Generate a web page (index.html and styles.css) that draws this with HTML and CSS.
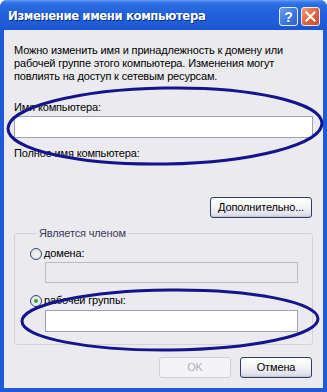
FILE: index.html
```html
<!DOCTYPE html>
<html lang="ru">
<head>
<meta charset="utf-8">
<title>Изменение имени компьютера</title>
<link rel="stylesheet" href="styles.css">
</head>
<body>
<div class="window">
  <div class="titlebar">
    <span class="title">Изменение имени компьютера</span>
    <div class="tbtns">
      <span class="tbtn help">?</span>
      <span class="tbtn close"><svg width="11" height="11" viewBox="0 0 11 11"><path d="M1.5 1.5 L9.5 9.5 M9.5 1.5 L1.5 9.5" stroke="#fff" stroke-width="2.2" stroke-linecap="square"/></svg></span>
    </div>
  </div>
  <div class="body">
    <p class="intro">Можно изменить имя и принадлежность к домену или<br>рабочей группе этого компьютера. Изменения могут<br>повлиять на доступ к сетевым ресурсам.</p>
    <div class="lbl first">Имя компьютера:</div>
    <div class="input name"></div>
    <div class="lbl full">Полное имя компьютера:</div>
    <div class="row-right more"><button class="btn wide">Дополнительно...</button></div>
    <fieldset class="group">
      <legend>Является членом</legend>
      <div class="radio r1"><span class="rb"></span>домена:</div>
      <div class="input sub disabled"></div>
      <div class="radio r2"><span class="rb checked"></span>рабочей группы:</div>
      <div class="input sub wg"></div>
    </fieldset>
    <div class="row-right actions">
      <button class="btn off">OK</button>
      <button class="btn">Отмена</button>
    </div>
  </div>
  <svg class="marks" width="327" height="392" viewBox="0 0 327 392">
    <ellipse cx="165" cy="126" rx="157" ry="38" transform="rotate(-1 165 126)" fill="none" stroke="#14148c" stroke-width="3"/>
    <ellipse cx="170" cy="320" rx="148" ry="30" transform="rotate(-0.5 170 320)" fill="none" stroke="#14148c" stroke-width="3"/>
  </svg>
</div>
</body>
</html>
```
FILE: styles.css
```css
* { box-sizing: border-box; }
html, body { margin: 0; padding: 0; background: #fff; }
body { width: 327px; height: 392px; overflow: hidden; }

.window {
  position: relative;
  width: 327px;
  height: 392px;
  display: flex;
  flex-direction: column;
  background: #1f5ad8;
  border-radius: 7px 7px 0 0;
  overflow: hidden;
  font-family: "Liberation Sans", Arial, sans-serif;
  font-size: 11px;
  letter-spacing: -0.15px;
  line-height: 13px;
  color: #000;
}

.titlebar {
  height: 30px;
  flex: none;
  display: flex;
  align-items: center;
  justify-content: space-between;
  padding: 0 7px 0 8px;
  background: linear-gradient(#6a9ef2 0, #3a7be9 2px, #2a6ce2 5px, #2463de 12px, #205dd9 22px, #1c56d2 30px);
}
.title {
  font-family: "DejaVu Sans Condensed", "DejaVu Sans", sans-serif;
  font-stretch: condensed;
  color: #fff;
  font-weight: bold;
  font-size: 13px;
  letter-spacing: -0.4px;
  text-shadow: 1px 1px 0 #0a2c84;
  padding-top: 1px;
}
.tbtns { display: flex; gap: 3px; padding-top: 3px; }
.tbtn {
  width: 19px;
  height: 19px;
  border: 1px solid #e8eefa;
  border-radius: 3px;
  display: flex;
  align-items: center;
  justify-content: center;
  color: #fff;
  font-weight: bold;
  font-size: 14px;
  line-height: 1;
}
.help { background: linear-gradient(135deg, #6d9cf0, #3a74e0 60%, #2d63d6); }
.close { background: linear-gradient(135deg, #f0a080, #e2643c 50%, #cc4a24); }

.body {
  flex: 1;
  margin: 0 4px 4px 4px;
  background: #ebebef;
  padding: 14px 10px 0 10px;
  display: flex;
  flex-direction: column;
}

.intro { margin: 0; }
.lbl.first { margin-top: 18px; }
.lbl.full { margin-top: 9px; }

.input {
  height: 22px;
  border: 1px solid #9aa4b4;
  background: #fff;
}
.input.name { margin-top: 2px; }

.row-right { display: flex; justify-content: flex-end; gap: 9px; padding-right: 1px; }
.more { margin-top: 37px; }

.btn {
  height: 21px;
  width: 72px;
  padding: 0;
  font: inherit;
  letter-spacing: inherit;
  color: #000;
  border: 1px solid #2c3e63;
  border-radius: 3px;
  background: linear-gradient(#ffffff 0, #f6f6f8 40%, #e2e2ea 85%, #cfd0da 100%);
  box-shadow: inset 0 -1px 0 #c4c6d2;
}
.btn.wide { width: 102px; }
.btn.off {
  color: #b0b0b0;
  border-color: #cfcfd4;
  background: #f4f4f6;
  box-shadow: none;
}

.group {
  margin: 9px 0 0 0;
  padding: 0 14px 12px 15px;
  border: 1px solid #d3d3d8;
  border-radius: 3px;
  min-inline-size: 0;
}
.group legend {
  padding: 0 2px;
  margin-left: 7px;
  color: #3a3a58;
}

.radio {
  display: flex;
  align-items: center;
  gap: 2px;
  height: 13px;
}
.r1 { margin-top: 7px; }
.r2 { margin-top: 11px; }
.rb {
  width: 12px;
  height: 12px;
  border-radius: 50%;
  border: 1px solid #2a4a74;
  background: radial-gradient(circle at 60% 60%, #f4f4f4, #dcdce2);
  display: flex;
  align-items: center;
  justify-content: center;
}
.rb.checked::after {
  content: "";
  width: 4px;
  height: 4px;
  border-radius: 50%;
  background: #36a838;
}

.input.sub { margin-left: 15px; }
.input.disabled { height: 21px; margin-top: 2px; background: #ebebef; border-color: #b8bcc6; }
.input.wg { margin-top: 3px; }

.actions { margin-top: 12px; }

.marks {
  position: absolute;
  left: 0;
  top: 0;
  pointer-events: none;
}
```
